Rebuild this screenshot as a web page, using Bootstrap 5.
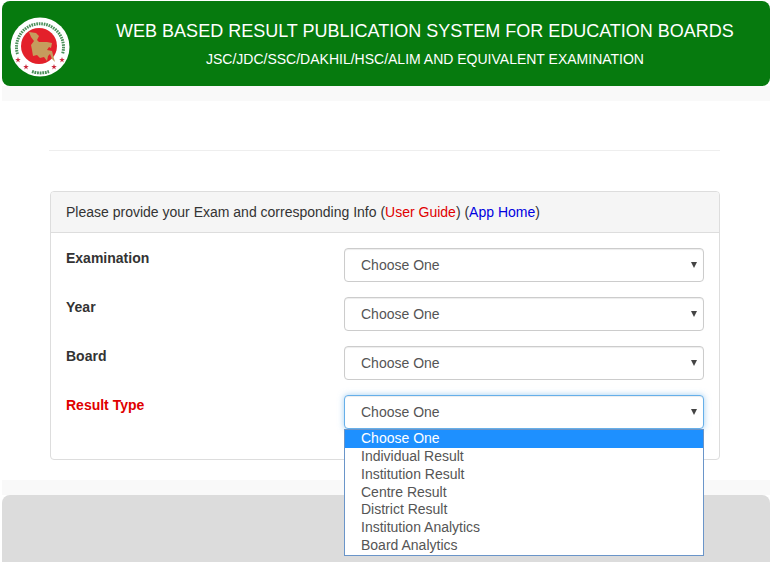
<!DOCTYPE html>
<html lang="en">
<head>
  <meta charset="UTF-8">
  <title>Web Based Result Publication System</title>
  <link href="https://cdn.jsdelivr.net/npm/bootstrap@5.3.0/dist/css/bootstrap.min.css" rel="stylesheet">
  <style>
    html, body { height: 562px; overflow: hidden; }
    body { background: #fff; font-family: "Liberation Sans", Arial, sans-serif; font-size: 14px; color: #333; }
    .page-wrap { padding: 1px 3px 0 2px; }
    .top-head { background: #067a0e; height: 85px; border-radius: 8px; color: #fff; padding-left: 8px; }
    .seal { width: 60px; height: 60px; flex: none; margin-top: 6px; }
    .head-text { margin-left: 10px; flex-grow: 1; text-align: center; }
    .head-text h1 { font-size: 18px; line-height: 20px; margin: 0 0 10px; font-weight: 400; }
    .head-text h2 { font-size: 14px; line-height: 16px; margin: 0; font-weight: 400; }
    .strip { background: #f9f9f9; height: 15px; }
    .content-box { padding: 49px 50px 0 47px; height: 379px; }
    .rule-line { height: 1px; background: #eee; margin: 0 0 40px; }
    .info-panel { border: 1px solid #ddd; border-radius: 4px; height: 269px; margin-left: 1px; background: #fff; }
    .info-head { background: #f5f5f5; border-bottom: 1px solid #ddd; height: 41px; padding: 0 15px; line-height: 41px; border-radius: 3px 3px 0 0; }
    .info-head .guide { color: #e00000; text-decoration: none; }
    .info-head .home { color: #0000e0; text-decoration: none; }
    .info-body { padding: 15px 15px 0; gap: 15px; }
    .field-row { height: 34px; }
    .field-name { width: 278px; font-weight: 700; line-height: 20px; flex: none; }
    .field-name.hot { color: #e00000; }
    .fake-select { width: 360px; height: 34px; border: 1px solid #ccc; border-radius: 4px; color: #555; padding: 0 16px; line-height: 32px; position: relative; background: #fff; box-shadow: inset 0 1px 1px rgba(0,0,0,.075); }
    .fake-select::after { content: ""; position: absolute; right: 6px; top: 13px; border-left: 3px solid transparent; border-right: 3px solid transparent; border-top: 6px solid #444; }
    .fake-select.open { border-color: #66afe9; box-shadow: inset 0 1px 1px rgba(0,0,0,.075), 0 0 6px rgba(102,175,233,.6); }
    .drop-list { position: absolute; left: 344px; top: 429px; width: 360px; background: #fff; border: 1px solid #6a95c9; color: #555; z-index: 5; }
    .drop-list div { height: 17.86px; line-height: 16.6px; padding-left: 16px; }
    .drop-list .picked { background: #1e90ff; color: #fff; }
    .foot-band { background: #f9f9f9; height: 15px; }
    .foot-box { background: #dcdcdc; height: 67px; border-radius: 8px 8px 0 0; }
  </style>
</head>
<body>
  <div class="page-wrap">
    <div class="top-head d-flex align-items-center">
      <svg class="seal" viewBox="0 0 60 60">
        <circle cx="30" cy="30" r="29.5" fill="#fff"/>
        <circle cx="29" cy="29" r="18" fill="#e3202a"/>
        <path d="M19 15 L26 16 L29 19 L27 23 L29 25 L37 25 L42 26 L41 31 L39 30 L37 33 L42 34 L43 38 L45 45 L42 42 L40 37 L38 39 L37 44 L34 40 L30 41 L27 38 L23 39 L22 33 L21 28 L24 24 L21 20 Z" fill="#c69c5d"/>
        <path d="M7.5 37 A23.5 23.5 0 1 1 52.5 37" fill="none" stroke="#4b8f5a" stroke-width="3" stroke-dasharray="1.6 .9"/>
        <path d="M22 54.5 A26 26 0 0 0 39 54.5" fill="none" stroke="#4b8f5a" stroke-width="3" stroke-dasharray="1.8 .8"/>
        <polygon points="8,40 8.7,42 10.8,42 9.1,43.3 9.7,45.4 8,44.1 6.3,45.4 6.9,43.3 5.2,42 7.3,42" fill="#c9283a"/>
        <polygon points="52,40 52.7,42 54.8,42 53.1,43.3 53.7,45.4 52,44.1 50.3,45.4 50.9,43.3 49.2,42 51.3,42" fill="#c9283a"/>
        <polygon points="16,47 16.7,49 18.8,49 17.1,50.3 17.7,52.4 16,51.1 14.3,52.4 14.9,50.3 13.2,49 15.3,49" fill="#c9283a"/>
        <polygon points="44,47 44.7,49 46.8,49 45.1,50.3 45.7,52.4 44,51.1 42.3,52.4 42.9,50.3 41.2,49 43.3,49" fill="#c9283a"/>
      </svg>
      <div class="head-text">
        <h1>WEB BASED RESULT PUBLICATION SYSTEM FOR EDUCATION BOARDS</h1>
        <h2>JSC/JDC/SSC/DAKHIL/HSC/ALIM AND EQUIVALENT EXAMINATION</h2>
      </div>
    </div>
    <div class="strip"></div>
    <div class="content-box">
      <div class="rule-line"></div>
      <div class="info-panel">
        <div class="info-head">Please provide your Exam and corresponding Info (<a class="guide" href="#">User Guide</a>) (<a class="home" href="#">App Home</a>)</div>
        <div class="info-body d-flex flex-column">
          <div class="field-row d-flex"><div class="field-name">Examination</div><div class="fake-select">Choose One</div></div>
          <div class="field-row d-flex"><div class="field-name">Year</div><div class="fake-select">Choose One</div></div>
          <div class="field-row d-flex"><div class="field-name">Board</div><div class="fake-select">Choose One</div></div>
          <div class="field-row d-flex"><div class="field-name hot">Result Type</div><div class="fake-select open">Choose One</div></div>
        </div>
      </div>
    </div>
    <div class="foot-band"></div>
    <div class="foot-box"></div>
  </div>
  <div class="drop-list">
    <div class="picked">Choose One</div>
    <div>Individual Result</div>
    <div>Institution Result</div>
    <div>Centre Result</div>
    <div>District Result</div>
    <div>Institution Analytics</div>
    <div>Board Analytics</div>
  </div>
  <script src="https://cdn.jsdelivr.net/npm/bootstrap@5.3.0/dist/js/bootstrap.bundle.min.js"></script>
</body>
</html>
